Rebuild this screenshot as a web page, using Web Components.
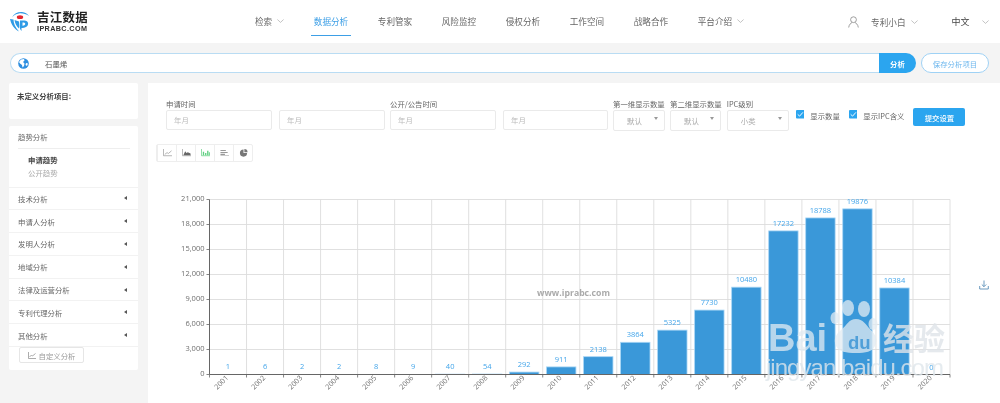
<!DOCTYPE html>
<html lang="zh"><head><meta charset="utf-8"><title>吉江数据</title>
<style>
html,body{margin:0;padding:0;height:403px;overflow:hidden;background:#f4f4f4;font-family:"Noto Sans CJK SC","Open Sans",sans-serif;color:#666}
body{filter:blur(.25px)}
</style></head><body>
<ip-header></ip-header>
<ip-search></ip-search>
<ip-layout>
  <ip-sidebar slot="side"></ip-sidebar>
  <ip-panel slot="main">
    <ip-filters></ip-filters>
    <ip-chart-tools></ip-chart-tools>
    <ip-chart></ip-chart>
  </ip-panel>
</ip-layout>
<script>
const chev='<svg width="7" height="4" viewBox="0 0 7 4"><path d="M.4.5 3.5 3.4 6.6.5" fill="none" stroke="#aaa" stroke-width=".7"/></svg>';
class Base extends HTMLElement{
  connectedCallback(){ if(!this.shadowRoot){ this.attachShadow({mode:'open'}).innerHTML=this.render(); } }
}
class IpHeader extends Base{ render(){ return `<style>
:host{display:flex;height:43px;background:#fff;align-items:stretch;position:relative}
.logo{display:flex;align-items:center;gap:7px;width:255px;padding-left:9px;box-sizing:border-box}
.lt{display:flex;flex-direction:column;color:#222;line-height:1;margin-top:-1px}
.cn{font-size:12.400px;font-weight:700;letter-spacing:.4px;line-height:14px}
.en{font:700 7.200px "Liberation Sans",sans-serif;letter-spacing:.4px;line-height:9px;color:#333}
nav{display:flex;gap:29.600px;font-size:8.600px;align-items:stretch}
nav div{display:flex;align-items:center;gap:5px;position:relative;padding-bottom:1px;white-space:nowrap;color:#666}
nav .on{color:#3d9fe6}
nav .on::after{content:"";position:absolute;left:-3px;right:-3px;bottom:7px;height:1px;background:#3d9fe6}
.r{display:flex;align-items:center;font-size:8.600px;margin-left:104px;white-space:nowrap}
.lang{color:#444;margin-left:33px;font-size:9px}
</style>
<div class="logo"><svg width="21" height="21" viewBox="0 0 21 21">
<path d="M3 6.500C5 2.500 9 .7 13 1c3 .3 5.500 1.600 7 4-3-2-6.500-3-10-2.600C7 2.800 4.800 4.300 3 6.500Z" fill="#2f9be6"/>
<ellipse cx="11" cy="6.200" rx="3.200" ry="1.900" fill="#e3262e"/>
<path d="M1 8C2 13 5 18 10 20.500 6 16 4.500 12 4.500 8.500Z" fill="#2f9be6"/>
<path d="M5.500 9C6 12.500 7.500 15.500 10 17.500V10.500Z" fill="#2f9be6"/>
<path d="M11 9.500h4.500c4 0 5 4.500 1.500 6.500-1.500.8-3 1-4.500.9v3.100C9.500 17 11 13 11 9.500Zm2.500 2v3.200c3 .2 3.800-3 1-3.200Z" fill="#2f9be6"/>
</svg><div class="lt"><span class="cn">吉江数据</span><span class="en">IPRABC.COM</span></div></div>
<nav><div>检索 ${chev}</div><div class="on">数据分析</div><div>专利管家</div><div>风险监控</div><div>侵权分析</div><div>工作空间</div><div>战略合作</div><div>平台介绍 ${chev}</div></nav>
<div class="r"><svg width="11" height="12" viewBox="0 0 11 12" style="margin-right:12px"><circle cx="5.500" cy="3.700" r="2.900" fill="none" stroke="#888" stroke-width=".8"/><path d="M.7 11.500C1 8.500 3 7 4 6.600M10.300 11.500C10 8.500 8 7 7 6.600" fill="none" stroke="#888" stroke-width=".8"/></svg>
<span>专利小白</span><span style="margin-left:6px;display:flex">${chev}</span><span class="lang">中文</span><span style="margin-left:12px;display:flex">${chev}</span></div>`; } }
class IpSearch extends Base{ render(){ return `<style>
:host{display:flex;height:20px;margin:10px 11px 0 10px;gap:5px;align-items:stretch}
.box{flex:1;display:flex;align-items:center;background:#fff;border:1px solid #b9dcf3;border-right:0;border-radius:10px 0 0 10px;box-sizing:border-box;font-size:7.400px;color:#555;padding-left:7px}
.box span{margin-left:16px}
.go{width:37px;margin-left:-5px;background:#2ba5ef;color:#fff;font-size:7.400px;font-weight:700;display:flex;align-items:center;justify-content:center;border-radius:0 10px 10px 0}
.save{width:68px;box-sizing:border-box;border:1px solid #9fd2f5;border-radius:10px;background:#fff;color:#6fb8ee;font-size:7.400px;display:flex;align-items:center;justify-content:center}
</style><div class="box"><svg width="11" height="11" viewBox="0 0 11 11"><circle cx="5.500" cy="5.500" r="5.300" fill="#2f8fe0"/><path d="M3 1.500 6 1l.5 1.500L5 4 6.500 5.500 6 8 4.500 9.500 4 7 2 5.500 1 4ZM8 5l2 .5L9 8 7.500 7Z" fill="#fff"/></svg><span>石墨烯</span></div><div class="go">分析</div><div class="save">保存分析项目</div>`; } }
class IpLayout extends Base{ render(){ return `<style>
:host{display:flex;gap:10px;margin:10px 0 0 9px;align-items:flex-start}
::slotted([slot=main]){flex:1}
</style><slot name="side"></slot><slot name="main"></slot>`; } }
class IpSidebar extends Base{ render(){
 const rows=['技术分析','申请人分析','发明人分析','地域分析','法律及运营分析','专利代理分析','其他分析'];
 return `<style>
:host{display:block;width:129px;font-size:7.400px;color:#666}
.card{background:#fff;border-radius:2px}
.t{height:36px;box-sizing:border-box;padding:8px 8px;font-weight:700;color:#444;line-height:10px;margin-bottom:7px;font-size:7.400px}
.h{margin:0 8px 0 9px;height:23px;line-height:21px;border-bottom:1px solid #eee;box-sizing:border-box}
.s{padding:4px 0 0 19px;height:38.500px;box-sizing:border-box;line-height:13px;border-bottom:1px solid #f2f2f2}
.s b{display:block;color:#444}.s span{color:#aaa;display:block}
.row{height:22.800px;box-sizing:border-box;padding:0 11px 0 9px;display:flex;align-items:center;justify-content:space-between;border-bottom:1px solid #f2f2f2}
.row:last-of-type{border-bottom:0}
.row i{width:0;height:0;border:2px solid transparent;border-left:0;border-right:3px solid #555}
.btn{margin:0 0 0 10px;width:65px;height:16px;box-sizing:border-box;border:1px solid #e6e6e6;border-radius:2px;display:flex;align-items:center;justify-content:center;gap:3px;color:#999;font-size:7.400px}
.w{padding-bottom:7px}
</style>
<div class="card t">未定义分析项目:</div>
<div class="card w"><div class="h">趋势分析</div><div class="s"><b>申请趋势</b><span>公开趋势</span></div>
${rows.map(r=>`<div class="row">${r}<i></i></div>`).join('')}
<div class="btn"><svg width="8" height="7" viewBox="0 0 8 7"><path d="M.5 0v6.500H8M1.500 5 3.500 3l1 1L7.500 1.500" fill="none" stroke="#888" stroke-width=".7"/></svg>自定义分析</div></div>`; } }
class IpPanel extends Base{ render(){ return `<style>:host{display:block;background:#fff;height:321px;position:relative;overflow:hidden}</style><slot></slot>`; } }
class IpFilters extends Base{ render(){
 const sel=(l,v,w)=>`<div class="f"><label>${l}</label><div class="sel" style="width:${w}px"><span>${v}</span><i></i></div></div>`;
 return `<style>
:host{display:flex;padding:16px 0 0 18px;font-size:7.400px;color:#666;align-items:flex-start}
.f{display:flex;flex-direction:column}
label{line-height:10.500px;white-space:nowrap;height:10.500px}
.two{display:flex;gap:7px}
.in{width:106px;height:20px;box-sizing:border-box;border:1px solid #eaeaea;border-radius:2px;color:#bbb;padding-left:7px;line-height:18px}
.g{margin-right:5px}
.sel{height:21.500px;box-sizing:border-box;border:1px solid #eaeaea;border-radius:2px;color:#aaa;display:flex;align-items:center;justify-content:space-between;padding:0 6px 0 13px}
.sel i{border:2.500px solid transparent;border-top:3px solid #999;border-bottom:0;width:0;height:0;margin-top:-3px}
.c{display:flex;align-items:center;gap:6px;margin-top:11px;white-space:nowrap}
.c svg{display:block;margin-top:-2px}
.sub{width:52px;height:18px;background:#2ba5ef;color:#fff;border-radius:2px;display:flex;align-items:center;justify-content:center;margin:9px 0 0 9px;font-weight:500}
</style>
<div class="f g"><label>申请时间</label><div class="two"><div class="in">年月</div><div class="in">年月</div></div></div>
<div class="f g"><label>公开/公告时间</label><div class="two"><div class="in">年月</div><div class="in" style="width:105px">年月</div></div></div>
<div style="display:flex;gap:5px;margin-right:7px">${sel('第一维显示数量','默认',52)}${sel('第二维显示数量','默认',51)}${sel('IPC级别','小类',62)}</div>
<div style="display:flex;gap:9px">
${['显示数量','显示IPC含义'].map(t=>`<div class="c"><svg width="8.500" height="8.500" viewBox="0 0 9 9"><rect width="9" height="9" rx="1" fill="#2ba5ef"/><path d="M1.800 4.600 3.800 6.500 7.300 2.500" fill="none" stroke="#fff" stroke-width="1"/></svg>${t}</div>`).join('')}
</div><div class="sub">提交设置</div>`; } }
class IpChartTools extends Base{ render(){
 const c='#999';
 const icons=[
 `<path d="M.5 0v7.500H10M2 6 4.500 4l1.500 1L9.500 2" fill="none" stroke="${c}" stroke-width=".8"/>`,
 `<path d="M.5 0v7.500H10" fill="none" stroke="${c}" stroke-width=".8"/><path d="M1.500 7 3.500 2.500 5 4.500 6.500 3.500 9.500 5V7Z" fill="#666"/>`,
 `<path d="M.5 0v7.500H10" fill="none" stroke="#5fcf80" stroke-width=".8"/><path d="M2 3h1.500v4H2ZM4.500 4.500H6V7H4.500ZM6.800 2h1.500v5H6.800ZM8.800 3.500h1V7h-1Z" fill="#5fcf80"/>`,
 `<path d="M.5 1h6v1.200h-6ZM.5 3.200h8v1.200h-8ZM.5 5.400h5v1.200h-5ZM.5 7.200h9.500v.7H.5Z" fill="${c}"/>`,
 `<path d="M5 .5a4 4 0 1 0 4 4H5Z" fill="#777"/><path d="M6 0a3.500 3.500 0 0 1 3.500 3.500H6Z" fill="#777"/>`];
 return `<style>
:host{display:flex;width:97px;height:18px;margin:13px 0 0 8px;border:1px solid #eee;border-radius:2px;box-sizing:border-box}
div{flex:1;display:flex;align-items:center;justify-content:center;border-left:1px solid #eee}
div:first-child{border-left:0}
</style>${icons.map(i=>`<div><svg width="9" height="7.200" viewBox="0 0 10 8">${i}</svg></div>`).join('')}`; } }
class IpChart extends Base{ render(){
 const data=[1,6,2,2,8,9,40,54,292,911,2138,3864,5325,7730,10480,17232,18788,19876,10384,0];
 const L=61.5,R=802,T=35.500,B=210.500,W=(R-L)/20,PX=(B-T)/21000;
 let g='';
 for(let i=0;i<=7;i++){const y=T+i*25; g+=`<line x1="${L}" x2="${R}" y1="${y}" y2="${y}" stroke="#dcdcdc" stroke-width=".9"/>`;
   const v=(21000-3000*i).toLocaleString('en-US');
   g+=`<text x="${L-5}" y="${y+1.800}" text-anchor="end" class="ax">${v}</text><line x1="${L-3}" x2="${L}" y1="${y}" y2="${y}" stroke="#666" stroke-width=".8"/>`;}
 for(let i=1;i<=20;i++){const x=L+i*W; g+=`<line x1="${x}" x2="${x}" y1="${T}" y2="${B}" stroke="#dcdcdc" stroke-width=".9"/>`;}
 data.forEach((v,i)=>{const cx=L+(i+.5)*W,h=v*PX,y=B-h;
   if(h>.3) g+=`<rect x="${cx-14.700}" y="${y}" width="29.400" height="${h}" fill="#3a98d9" stroke="#a9d6f5" stroke-width=".8"/>`;
   g+=`<text x="${cx}" y="${y-5}" text-anchor="middle" class="val">${v}</text>`;
   const lx=cx-.5,ly=B+2.500;
   g+=`<text transform="translate(${lx} ${ly}) rotate(-45)" text-anchor="end" dominant-baseline="middle" class="ax x">${2001+i}</text>`;
 });
 g+=`<path d="M${L} ${T}V${B}H${R}" fill="none" stroke="#666" stroke-width="1"/>`;
 for(let i=0;i<=20;i++){const x=L+i*W; g+=`<line x1="${x}" x2="${x}" y1="${B}" y2="${B+3}" stroke="#666" stroke-width=".8"/>`;}
 return `<style>
:host{display:block;position:absolute;left:0;top:0;width:852px;height:321px;pointer-events:none}
svg{position:absolute;left:0;top:81px;display:block}
.ax{font:7.500px "Open Sans",sans-serif;fill:#6e6e6e}
.x{font-size:7.200px}
.val{font:7.500px "Open Sans",sans-serif;fill:#45a6ea}
.wm{font:700 8.700px "Open Sans",sans-serif;fill:#aaa}
.dl{position:absolute;left:831px;top:197px}
.bw{position:absolute;left:612px;top:214px;overflow:visible}
.b1{font:700 38px "Liberation Sans",sans-serif;fill:#e2ebf1;fill-opacity:.75}
.b2{font:700 31px "Noto Sans CJK SC",sans-serif;fill:#dfe4e8;fill-opacity:.8}
.b3{font:400 24px "Liberation Sans",sans-serif;fill:#dfe6eb;fill-opacity:.8}
.du{font:700 18.500px "Liberation Sans",sans-serif;fill:#4f9fd8}
</style>
<svg width="852" height="240" viewBox="0 0 852 240">${g}
<text x="389" y="132" class="wm">www.iprabc.com</text></svg>
<svg class="dl" width="10" height="10" viewBox="0 0 10 10"><path d="M5 .5v6M2.800 4.500 5 6.700 7.200 4.500M.7 6v3h8.600V6" fill="none" stroke="#5b8fb8" stroke-width=".9"/></svg>
<svg class="bw" width="190" height="100" viewBox="0 0 190 100">
<text x="8" y="54" class="b1">Bai</text>
<g fill="#e2ebf1" fill-opacity=".75"><ellipse cx="88" cy="11" rx="6" ry="8"/><ellipse cx="104" cy="12" rx="6" ry="8"/><ellipse cx="75" cy="21" rx="4.500" ry="6" /><ellipse cx="113" cy="27" rx="4.500" ry="6"/>
<path d="M96 22c7 0 10 6 14 10 6 6 8 10 5 17-3 6-9 7-19 7s-17-1-20-7c-3-7 0-12 6-17 5-4 7-10 14-10Z"/></g>
<text x="88" y="52" class="du">du</text>
<text x="123" y="53" class="b2">经验</text>
<text x="6" y="79" class="b3" textLength="178">jingyan.baidu.com</text>
</svg>`; } }
customElements.define('ip-header',IpHeader);
customElements.define('ip-search',IpSearch);
customElements.define('ip-layout',IpLayout);
customElements.define('ip-sidebar',IpSidebar);
customElements.define('ip-panel',IpPanel);
customElements.define('ip-filters',IpFilters);
customElements.define('ip-chart-tools',IpChartTools);
customElements.define('ip-chart',IpChart);
</script>
</body></html>
